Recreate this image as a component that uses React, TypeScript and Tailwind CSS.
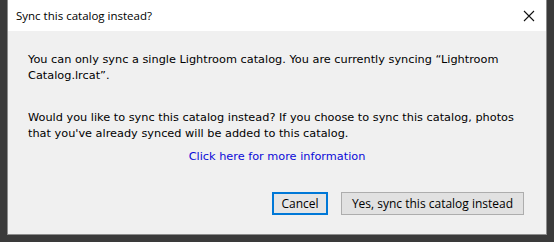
import React from "react";

export default function App() {
  const ui = { fontFamily: '"Open Sans", "Noto Sans", sans-serif' };
  const body = { fontFamily: '"DejaVu Sans", sans-serif' };
  return (
    <div className="w-[554px] h-[242px] bg-[#3a3a3a] pl-[7px] pr-[7px] overflow-hidden">
      <div className="w-[540px] h-[235px] flex flex-col border-l border-r border-b border-[#8c8c8c] bg-[#f0f0f0]">
        <div className="h-[31px] bg-white flex items-center justify-between pl-[8px] pr-[10px]">
          <span className="text-[11.5px] text-black" style={ui}>Sync this catalog instead?</span>
          <svg width="12" height="12" viewBox="0 0 12 12" className="mr-[1px]">
            <path d="M1 1 L11 11 M11 1 L1 11" stroke="#111" strokeWidth="1.1" fill="none" />
          </svg>
        </div>
        <div className="flex flex-col pl-[20px] pt-[21px] text-[11.3px] leading-[16px] text-black" style={body}>
          <p className="whitespace-nowrap">
            You can only sync a single Lightroom catalog. You are currently syncing “Lightroom
            <br />
            Catalog.lrcat”.
          </p>
          <p className="whitespace-nowrap mt-[26px]">
            Would you like to sync this catalog instead? If you choose to sync this catalog, photos
            <br />
            that you've already synced will be added to this catalog.
          </p>
          <div className="mt-[7px] pr-[20px] text-center">
            <span className="text-[#0a0ad8]">Click here for more information</span>
          </div>
        </div>
        <div className="flex justify-end gap-[13px] pr-[22px] mt-[27px]" style={ui}>
          <button className="w-[56px] h-[23px] border-2 border-[#0078d7] bg-[#e5e5e5] text-[12px] text-black">
            Cancel
          </button>
          <button className="w-[183px] h-[23px] border border-[#adadad] bg-[#e1e1e1] text-[12px] text-black">
            Yes, sync this catalog instead
          </button>
        </div>
      </div>
    </div>
  );
}
